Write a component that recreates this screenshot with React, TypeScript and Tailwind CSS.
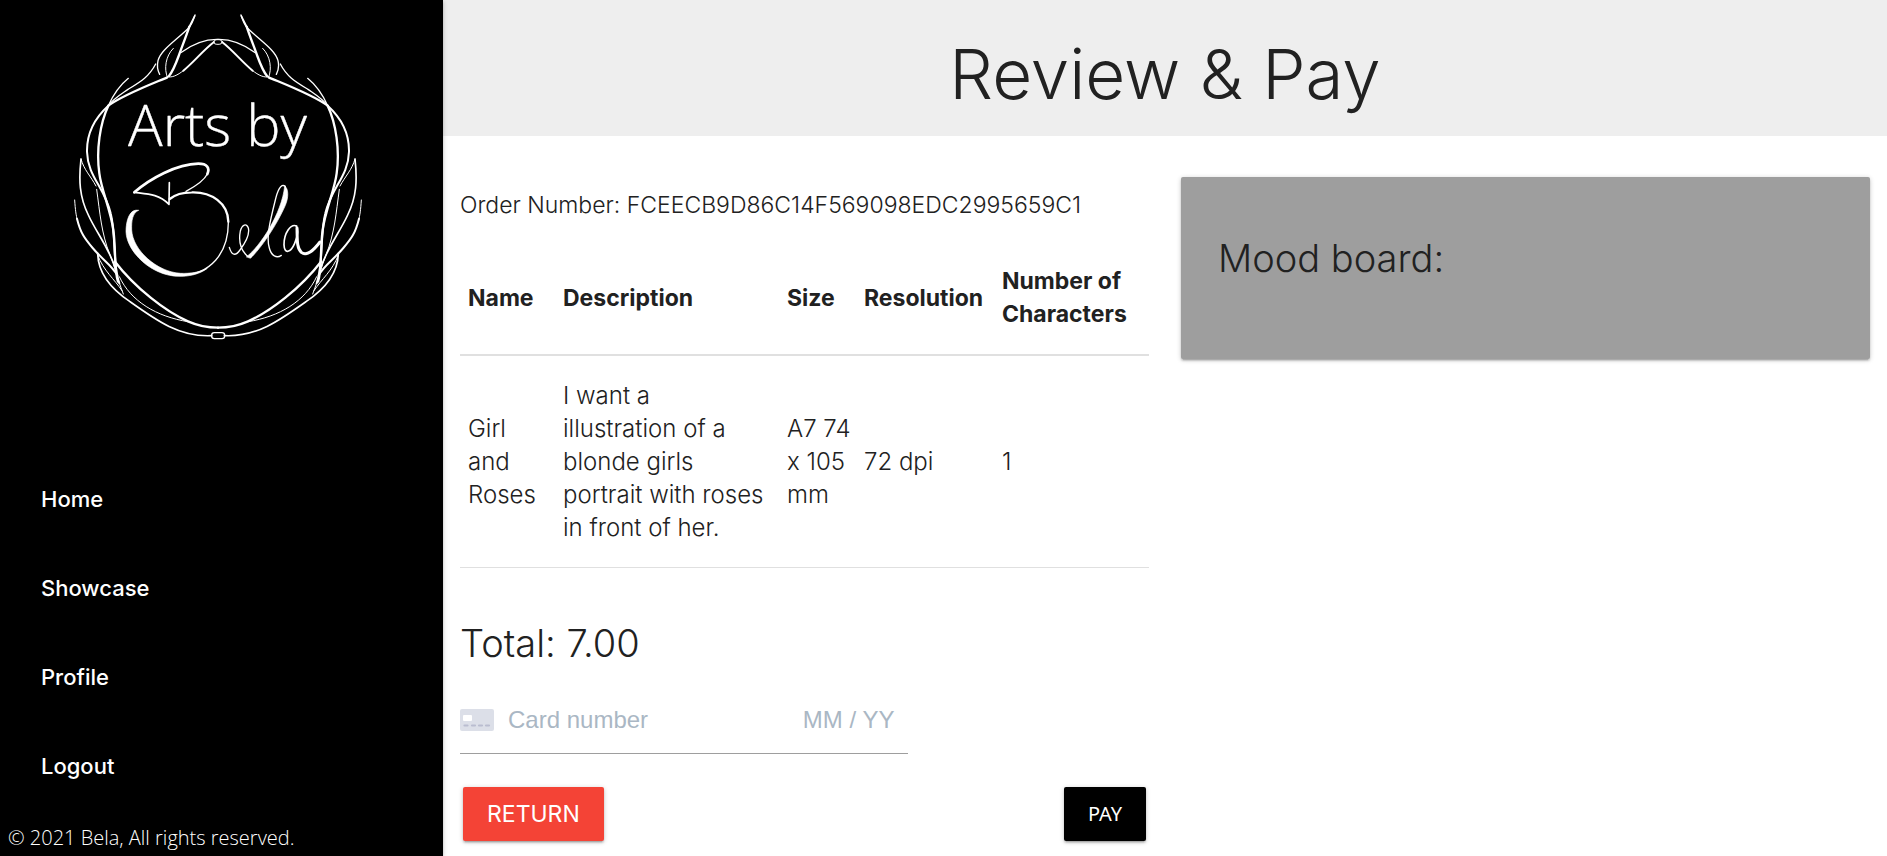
const links = ["Home", "Showcase", "Profile", "Logout"];

/* One side of the wreath; the other side is its mirror image. */
function WreathHalf() {
  return (
    <g>
      <path d="M405 45C398 68 393 76 386 84C345 124 302 150 294 182C290 200 294 214 299 223" strokeWidth="4" />
      <path d="M404 48L388 80" strokeWidth="5" />
      <path d="M388 80C378 110 366 140 356 168C348 190 340 212 327 228" strokeWidth="7" />
      <path d="M340 145C316 168 312 208 322 231" strokeWidth="3" />
      <path d="M474 118C430 117 392 136 362 158" strokeWidth="4" />
      <path d="M462 126C430 150 400 188 370 212" strokeWidth="6" />
      <path d="M370 212C352 226 336 234 322 230" strokeWidth="3" />
      <path d="M287 192C266 232 240 246 204 268C178 286 158 298 145 317" strokeWidth="4" />
      <path d="M322 232C280 250 190 284 145 317" strokeWidth="7" />
      <path d="M205 235C184 252 160 284 145 317" strokeWidth="4" />
      <path d="M145 317C102 356 80 402 81 455C83 530 134 562 152 640C168 700 158 800 178 850" strokeWidth="6" />
      <path d="M145 317C120 370 108 450 118 520C124 570 152 630 160 690C168 750 162 810 174 845" strokeWidth="7" />
      <path d="M63 477C56 540 58 590 85 645C110 700 148 744 168 810" strokeWidth="5" />
      <path d="M63 477C72 510 92 528 108 558" strokeWidth="3" />
      <path d="M110 568C120 640 124 700 150 765C164 800 170 830 190 882" strokeWidth="3" />
      <path d="M44 600C46 630 48 645 52 660" strokeWidth="3" />
      <path d="M51 656C62 700 74 716 98 744C130 782 156 796 172 826" strokeWidth="6" />
      <path d="M165 785C226 864 316 934 384 964C420 980 450 983 474 983" strokeWidth="7" />
      <path d="M113 760C114 820 158 870 210 905C290 962 360 1012 455 1007" strokeWidth="5" />
      <path d="M113 765C130 812 164 838 186 872" strokeWidth="3" />
      <path d="M178 830C212 904 290 950 384 965" strokeWidth="3" />
    </g>
  );
}

function Logo() {
  return (
    <svg viewBox="0 0 960 1050" className="ml-15 h-[350px] w-80" role="img" aria-label="Arts by Bela" fill="none" stroke="#fff" strokeLinecap="round" strokeLinejoin="round">
      <WreathHalf />
      <g transform="translate(948 0) scale(-1 1)">
        <WreathHalf />
      </g>
      <ellipse cx="474" cy="126" rx="13" ry="7" strokeWidth="3" />
      <rect x="455" y="998" width="39" height="18" rx="8" strokeWidth="4" />
      <text x="204" y="439" fontSize="173" fill="#fff" strokeWidth="1" className="font-['Open_Sans'] font-light">Arts by</text>
      <g transform="translate(180 450)">
        <path d="M55 181C30 175 18 210 18 245C20 305 95 380 180 379C210 379 240 372 262 355C240 367 210 371 182 370C110 366 38 300 35 240C34 210 38 190 55 181Z" fill="#fff" strokeWidth="2" />
        <path d="M182 375C270 375 326 310 325 215" strokeWidth="4" />
        <path d="M325 215C324 160 275 125 215 127C185 127 165 134 149 147" strokeWidth="7" />
        <path d="M43 127C90 86 170 42 235 41C262 41 270 54 262 72" strokeWidth="8" />
        <path d="M262 72C252 92 228 108 198 124" strokeWidth="4" />
        <path d="M43 127C84 132 116 132 147 163L148 98" strokeWidth="5" />
        <path d="M328 292C335 316 346 320 360 300C378 276 390 254 385 234C380 218 366 224 361 243C356 270 362 296 376 312C382 320 386 322 392 321" strokeWidth="4" />
        <path d="M380 320C420 290 486 190 494 108C506 116 506 142 496 166C470 226 422 296 392 324Z" fill="#fff" strokeWidth="2" />
        <path d="M496 109C482 98 472 124 466 150C450 214 438 262 448 294C454 318 470 326 484 316" strokeWidth="4" />
        <path d="M530 228C512 220 492 250 492 284C493 314 512 308 524 280C534 256 538 238 528 228" strokeWidth="5" />
        <path d="M531 234C532 270 530 294 544 307C560 320 580 302 600 276" strokeWidth="9" />
      </g>
    </svg>
  );
}

function CardIcon() {
  return (
    <svg viewBox="0 0 34 22" className="h-[22px] w-[34px] shrink-0" aria-hidden="true">
      <rect width="34" height="22" rx="2" fill="#dcdfe8" />
      <rect x="3" y="6" width="9" height="6" rx="1" fill="#fff" />
      <path d="M4.500 16.500h3M12 16.500h3M19 16.500h3M26 16.500h3" stroke="#babdd0" strokeWidth="2.200" strokeLinecap="round" />
    </svg>
  );
}

const elevation =
  "shadow-[0_2px_2px_0_rgba(0,0,0,0.14),0_3px_1px_-2px_rgba(0,0,0,0.12),0_1px_5px_0_rgba(0,0,0,0.2)]";

export default function App() {
  return (
    <div className="flex min-h-screen bg-white font-['Inter',sans-serif] text-[23px] leading-[33px] font-light text-[#212121]">
      <aside className={`z-10 flex w-[443px] shrink-0 flex-col bg-black text-white ${elevation}`}>
        <Logo />
        <nav className="mt-[105px]">
          {links.map((name) => (
            <a key={name} href="#" className="block px-[41px] py-7 text-[22px] leading-[33px] font-medium">
              {name}
            </a>
          ))}
        </nav>
        <footer className="mt-auto px-2 font-['Open_Sans',sans-serif] text-xl leading-9">
          © 2021 Bela, All rights reserved.
        </footer>
      </aside>

      <main className="min-w-0 flex-1">
        <header className="bg-[#eeeeee] pt-[34px] pb-[22px] text-center">
          <h1 className="text-[69px] leading-20">Review &amp; Pay</h1>
        </header>

        <div className="grid grid-cols-2 items-start gap-8 px-[17px] pt-[41px]">
          <section>
            <p className="mt-3">Order Number: FCEECB9D86C14F569098EDC2995659C1</p>

            <table className="mt-5 w-full table-fixed border-collapse text-left">
              <colgroup>
                <col className="w-[95px]" />
                <col className="w-[224px]" />
                <col className="w-[77px]" />
                <col className="w-[138px]" />
                <col />
              </colgroup>
              <thead className="font-semibold">
                <tr className="border-b-2 border-[#e0e0e0]">
                  <th className="px-2 py-[23px]">Name</th>
                  <th className="px-2 py-[23px]">Description</th>
                  <th className="px-2 py-[23px]">Size</th>
                  <th className="px-2 py-[23px]">Resolution</th>
                  <th className="px-2 py-[23px]">Number of Characters</th>
                </tr>
              </thead>
              <tbody className="text-2xl leading-[33px]">
                <tr className="border-b border-[#e0e0e0]">
                  <td className="py-[23px] pl-2">Girl<br />and<br />Roses</td>
                  <td className="py-[23px] pl-2">
                    I want a<br />
                    illustration of a<br />
                    blonde girls<br />
                    portrait with roses<br />
                    in front of her.
                  </td>
                  <td className="py-[23px] pl-2 whitespace-nowrap">
                    A7 74<br />x 105<br />mm
                  </td>
                  <td className="px-2 py-[23px]">72 dpi</td>
                  <td className="px-2 py-[23px]">1</td>
                </tr>
              </tbody>
            </table>

            <h2 className="mt-[51px] text-[38px] leading-12">Total: 7.00</h2>

            <form className="mt-5" onSubmit={(event) => event.preventDefault()}>
              <div className="flex h-[67px] w-[65%] items-center border-b border-[#9e9e9e] font-['Liberation_Sans',sans-serif] font-normal">
                <CardIcon />
                <input
                  aria-label="Card number"
                  placeholder="Card number"
                  className="ml-3.5 min-w-0 flex-1 bg-transparent text-2xl outline-none placeholder:text-[#aab7c4]"
                />
                <input
                  aria-label="Expiry date"
                  placeholder="MM / YY"
                  className="w-[105px] bg-transparent text-2xl outline-none placeholder:text-[#aab7c4]"
                />
              </div>
              <div className="flex justify-between px-[3px] pt-[33px]">
                <button type="button" className={`h-[54px] rounded-xs bg-[#f44336] px-6 text-[23px] font-normal text-white ${elevation}`}>
                  RETURN
                </button>
                <button type="submit" className={`h-[54px] rounded-xs bg-black px-6 font-['Noto_Sans',sans-serif] text-xl font-normal text-white ${elevation}`}>
                  PAY
                </button>
              </div>
            </form>
          </section>

          <section className={`rounded-xs bg-[#9e9e9e] px-[37px] pt-[57px] pb-[77px] ${elevation}`}>
            <h2 className="text-[38px] leading-12">Mood board:</h2>
          </section>
        </div>
      </main>
    </div>
  );
}
